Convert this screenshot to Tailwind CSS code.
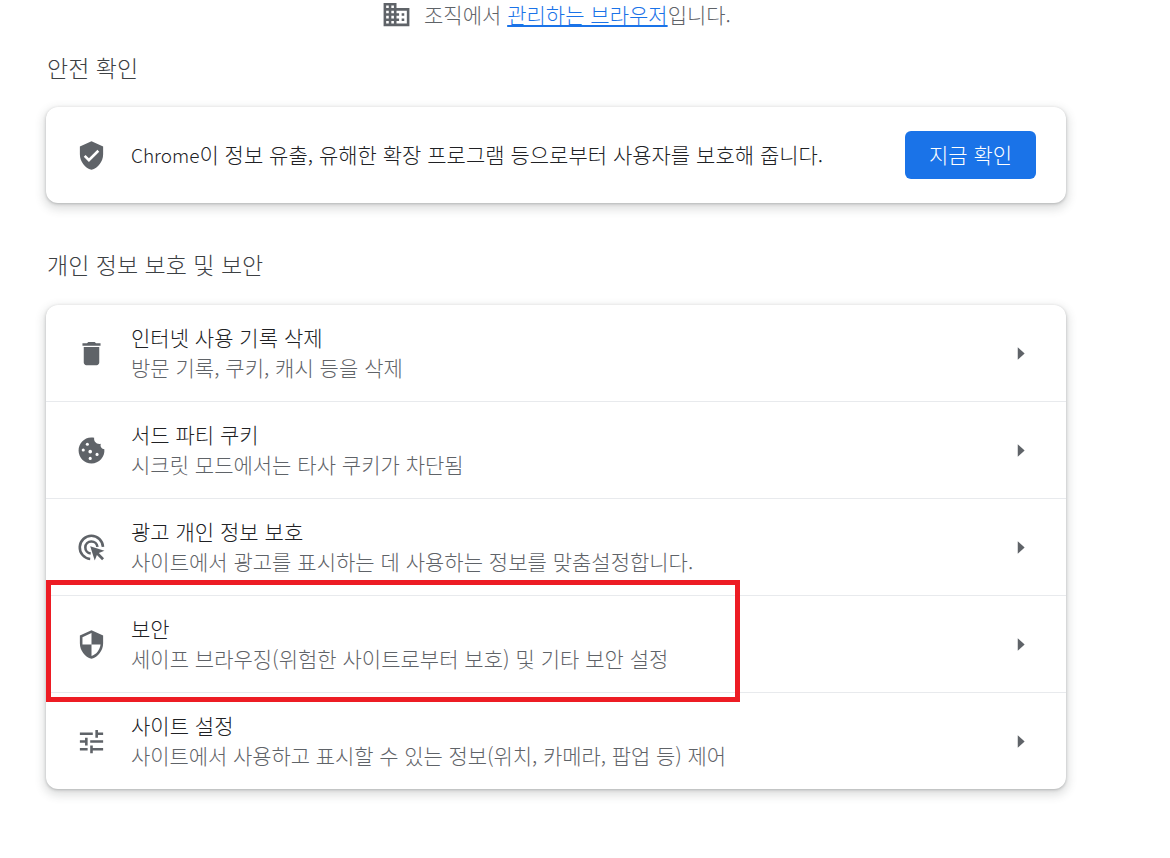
<!DOCTYPE html>
<html lang="ko">
<head>
<meta charset="utf-8">
<script src="https://cdn.jsdelivr.net/npm/@tailwindcss/browser@4"></script>
</head>
<body class="bg-white font-['Noto_Sans_CJK_KR','Noto_Sans',sans-serif] font-light">
<div class="relative w-[1170px] h-[858px] overflow-hidden">
  <div class="h-[29px] flex items-center pl-[381px] text-[21px] text-[#5f6368] gap-[12px] leading-[28px]">
    <svg class="w-[31px] h-[31px] shrink-0" viewBox="0 0 24 24" fill="#5f6368"><path d="M12 7V3H2v18h20V7H12zM6 19H4v-2h2v2zm0-4H4v-2h2v2zm0-4H4V9h2v2zm0-4H4V5h2v2zm4 12H8v-2h2v2zm0-4H8v-2h2v2zm0-4H8V9h2v2zm0-4H8V5h2v2zm10 12h-8v-2h2v-2h-2v-2h2v-2h-2V9h8v10zm-2-8h-2v2h2v-2zm0 4h-2v2h2v-2z"/></svg>
    <span class="-translate-y-[1px]">조직에서 <a class="text-[#1a73e8] underline">관리하는 브라우저</a>입니다.</span>
  </div>
  <h2 class="mt-[23px] ml-[47px] text-[23px] leading-[30px] font-light text-[#3c4043]">안전 확인</h2>
  <section class="mt-[25px] ml-[46px] w-[1020px] h-[96px] bg-white rounded-[12px] shadow-[0_1px_3px_rgba(60,64,67,0.3),0_4px_8px_3px_rgba(60,64,67,0.15)] flex items-center">
    <div class="w-[85px] pl-[5px] flex justify-center">
      <svg class="w-[31px] h-[31px]" viewBox="0 0 24 24" fill="#5f6368"><path d="M12 1 3 5v6c0 5.55 3.84 10.74 9 12 5.16-1.26 9-6.45 9-12V5l-9-4zm-2 16-4-4 1.41-1.41L10 14.17l6.59-6.59L18 9l-8 8z"/></svg>
    </div>
    <p class="flex-1 text-[21px] text-[#202124] leading-[28px] pb-[2px]"><span class="text-[19px]">Chrome</span>이 정보 유출, 유해한 확장 프로그램 등으로부터 사용자를 보호해 줍니다.</p>
    <button class="mr-[30px] w-[131px] h-[48px] rounded-[6px] bg-[#1a73e8] text-white text-[21px] font-light">지금 확인</button>
  </section>
  <h2 class="mt-[46px] ml-[47px] text-[23px] leading-[30px] font-light text-[#3c4043]">개인 정보 보호 및 보안</h2>
  <section class="mt-[26px] ml-[46px] w-[1020px] h-[484px] bg-white rounded-[12px] shadow-[0_1px_3px_rgba(60,64,67,0.3),0_4px_8px_3px_rgba(60,64,67,0.15)] flex flex-col">
    <div class="h-[96px] flex items-center">
      <div class="w-[85px] pl-[5px] flex justify-center">
        <svg class="w-[31px] h-[31px]" viewBox="0 0 24 24" fill="#5f6368"><path d="M6 19c0 1.1.9 2 2 2h8c1.1 0 2-.9 2-2V7H6v12zM19 4h-3.5l-1-1h-5l-1 1H5v2h14V4z"/></svg>
      </div>
      <div class="flex-1 text-[21px] leading-[30px] pb-[3px]"><div class="text-[#202124]">인터넷 사용 기록 삭제</div><div class="text-[#5f6368]">방문 기록, 쿠키, 캐시 등을 삭제</div></div>
      <svg class="w-[33px] h-[33px] mr-[29px]" viewBox="0 0 24 24" fill="#5f6368"><path d="M10 7.5v9l5-4.5z"/></svg>
    </div>
    <div class="h-[97px] flex items-center border-t border-[#e8eaed]">
      <div class="w-[85px] pl-[5px] flex justify-center">
        <svg class="w-[31px] h-[31px]" viewBox="0 0 24 24" fill="#5f6368"><path d="M21.95 10.99c-1.79-.03-3.7-1.95-2.68-4.22-2.97 1-5.78-1.59-5.19-4.56C7.11.74 2 6.41 2 12c0 5.52 4.48 10 10 10 5.89 0 10.54-5.08 9.95-11.01z"/><g fill="#fff"><circle cx="5.6" cy="11.6" r="1.2"/><circle cx="8.8" cy="7.2" r="1.2"/><circle cx="11" cy="12.9" r="1.4"/><circle cx="16.3" cy="15" r="1.2"/><circle cx="11" cy="18.1" r="1.2"/></g></svg>
      </div>
      <div class="flex-1 text-[21px] leading-[30px] pb-[3px]"><div class="text-[#202124]">서드 파티 쿠키</div><div class="text-[#5f6368]">시크릿 모드에서는 타사 쿠키가 차단됨</div></div>
      <svg class="w-[33px] h-[33px] mr-[29px]" viewBox="0 0 24 24" fill="#5f6368"><path d="M10 7.5v9l5-4.5z"/></svg>
    </div>
    <div class="h-[97px] flex items-center border-t border-[#e8eaed]">
      <div class="w-[85px] pl-[5px] flex justify-center">
        <svg class="w-[31px] h-[31px]" viewBox="0 0 24 24" fill="none" stroke="#5f6368" stroke-width="2"><path d="M20.9 11.5A9 9 0 1 0 11 20.9"/><path d="M16.6 11.6a4.7 4.7 0 1 0-5.2 5.1"/><path fill="#5f6368" stroke="none" d="m11 11 11 3.6-4.3 1.7 4 4-1.5 1.5-4-4-1.7 4.3z"/></svg>
      </div>
      <div class="flex-1 text-[21px] leading-[30px] pb-[3px]"><div class="text-[#202124]">광고 개인 정보 보호</div><div class="text-[#5f6368]">사이트에서 광고를 표시하는 데 사용하는 정보를 맞춤설정합니다.</div></div>
      <svg class="w-[33px] h-[33px] mr-[29px]" viewBox="0 0 24 24" fill="#5f6368"><path d="M10 7.5v9l5-4.5z"/></svg>
    </div>
    <div class="h-[97px] flex items-center border-t border-[#e8eaed]">
      <div class="w-[85px] pl-[5px] flex justify-center">
        <svg class="w-[31px] h-[31px]" viewBox="0 0 24 24" fill="#5f6368"><path d="M12 1 3 5v6c0 5.55 3.84 10.74 9 12 5.16-1.26 9-6.45 9-12V5l-9-4zm0 10.99h7c-.53 4.12-3.28 7.79-7 8.94V12H5V6.3l7-3.11v8.8z"/></svg>
      </div>
      <div class="flex-1 text-[21px] leading-[30px] pb-[3px]"><div class="text-[#202124]">보안</div><div class="text-[#5f6368]">세이프 브라우징(위험한 사이트로부터 보호) 및 기타 보안 설정</div></div>
      <svg class="w-[33px] h-[33px] mr-[29px]" viewBox="0 0 24 24" fill="#5f6368"><path d="M10 7.5v9l5-4.5z"/></svg>
    </div>
    <div class="h-[97px] flex items-center border-t border-[#e8eaed]">
      <div class="w-[85px] pl-[5px] flex justify-center">
        <svg class="w-[31px] h-[31px]" viewBox="0 0 24 24" fill="#5f6368"><path d="M3 17v2h6v-2H3zM3 5v2h10V5H3zm10 16v-2h8v-2h-8v-2h-2v6h2zM7 9v2H3v2h4v2h2V9H7zm14 4v-2H11v2h10zm-6-4h2V7h4V5h-4V3h-2v6z"/></svg>
      </div>
      <div class="flex-1 text-[21px] leading-[30px] pb-[3px]"><div class="text-[#202124]">사이트 설정</div><div class="text-[#5f6368] tracking-[-0.08px]">사이트에서 사용하고 표시할 수 있는 정보(위치, 카메라, 팝업 등) 제어</div></div>
      <svg class="w-[33px] h-[33px] mr-[29px]" viewBox="0 0 24 24" fill="#5f6368"><path d="M10 7.5v9l5-4.5z"/></svg>
    </div>
  </section>
  <div class="absolute left-[46px] top-[580px] w-[694px] h-[122px] border-[5px] border-[#ed1c24]"></div>
</div>
</body>
</html>
